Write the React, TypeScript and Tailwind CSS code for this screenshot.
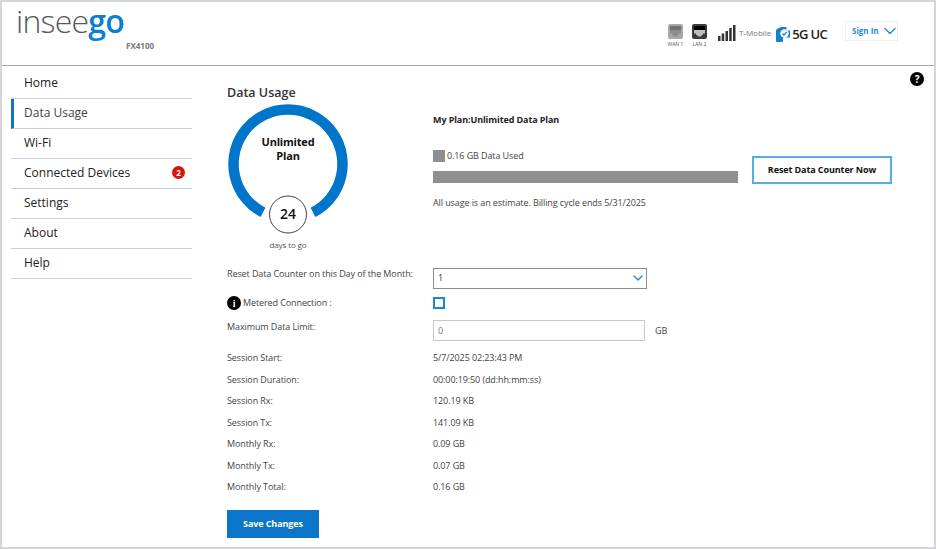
import { ChevronDown } from "lucide-react";

const navItems = ["Home", "Data Usage", "Wi-Fi", "Connected Devices", "Settings", "About", "Help"];

const sessionRows = [
  { label: "Session Start:", value: "5/7/2025 02:23:43 PM" },
  { label: "Session Duration:", value: "00:00:19:50 (dd:hh:mm:ss)" },
  { label: "Session Rx:", value: "120.19 KB" },
  { label: "Session Tx:", value: "141.09 KB" },
  { label: "Monthly Rx:", value: "0.09 GB" },
  { label: "Monthly Tx:", value: "0.07 GB" },
  { label: "Monthly Total:", value: "0.16 GB" },
];

function PortIcon({ frame, port, pins, label }: { frame: string; port: string; pins: string; label: string }) {
  return (
    <div className="flex w-[15px] flex-col items-center">
      <svg width="15" height="15" viewBox="0 0 15 15">
        <rect width="15" height="15" rx="2" fill={frame} />
        <rect x="2" y="2" width="11" height="4" fill={port} />
        <path d="M2 6h11v3.500h-2V11H9.500v1.500h-4V11H4V9.500H2z" fill={pins} />
      </svg>
      <span className="mt-[2px] whitespace-nowrap text-[5px] leading-[6px] text-[#555]">{label}</span>
    </div>
  );
}

function SignalBars() {
  return (
    <svg width="18" height="16" viewBox="0 0 18 16">
      <rect x="0" y="11" width="2.500" height="5" fill="#333" />
      <rect x="3.700" y="8.500" width="2.500" height="7.500" fill="#333" />
      <rect x="7.500" y="6" width="2.500" height="10" fill="#333" />
      <rect x="11.200" y="3" width="2.500" height="13" fill="#333" />
      <rect x="15" y="0" width="2.500" height="16" fill="#333" />
    </svg>
  );
}

function CarrierBadge() {
  return (
    <svg width="14" height="15" viewBox="0 0 14 15">
      <path d="M0 3.500Q0 2.500 1 2L4.500.3Q5 0 6 0h4.500v3.500H14v7H7v3.500Q7 15 6 15H1Q0 15 0 14z" fill="#1580d0" />
      <circle cx="8.500" cy="6.500" r="4.200" fill="#fff" />
      <path d="M6.500 6.500l1.500 1.500 2.800-3.200" fill="none" stroke="#1580d0" strokeWidth="1.200" />
    </svg>
  );
}

function Gauge() {
  return (
    <div className="relative h-[150px] w-[122px]">
      <svg width="122" height="132" viewBox="0 0 122 132">
        <path d="M 36 108.400 A 54.500 54.500 0 1 1 86 108.400" fill="none" stroke="#0075c9" strokeWidth="10.500" />
        <circle cx="61" cy="110.500" r="18.500" fill="#fff" stroke="#444" strokeWidth="1" />
      </svg>
      <div className="absolute left-0 right-0 top-[31px] text-center text-[11px] font-bold leading-[14px] tracking-[-0.2px] text-[#111]">
        Unlimited
        <br />
        Plan
      </div>
      <div className="absolute left-0 right-0 top-[100px] text-center text-[14px] font-semibold leading-[20px] text-[#111]">
        24
      </div>
      <div className="absolute left-0 right-0 top-[135px] text-center text-[8px] leading-[12px] text-[#555]">
        days to go
      </div>
    </div>
  );
}

export default function App() {
  return (
    <div className="flex h-[549px] w-[936px] flex-col overflow-hidden border-2 border-[#d6d6da] bg-white font-['Open_Sans',sans-serif] text-[#333]">
      <header className="flex h-[64px] shrink-0 border-b border-[#a9a9ad]">
        <div className="relative w-[200px] pl-[14px]">
          <div className="text-[32px] font-light leading-[38px] tracking-[-0.8px] text-[#58595b]">
            insee<span className="font-semibold text-[#0a7fd6]">go</span>
          </div>
          <div className="absolute left-[124px] top-[38px] text-[8px] font-bold text-[#777]">FX4100</div>
        </div>
        <div className="ml-auto flex items-start pr-[36px] pt-[19px]">
          <div className="mt-[3px] flex gap-[9px]">
            <PortIcon frame="#a8a8a8" port="#6f6f6f" pins="#8c8c8c" label="WAN 1" />
            <PortIcon frame="#3a3a3a" port="#000" pins="#bdbdbd" label="LAN 2" />
          </div>
          <div className="ml-[11px] mt-[4px] flex items-center gap-[3px]">
            <SignalBars />
            <span className="text-[8px] text-[#777]">T-Mobile</span>
          </div>
          <div className="ml-[5px] mt-[6px] flex items-center gap-[2px]">
            <CarrierBadge />
            <span className="text-[13px] font-semibold leading-[15px] tracking-[-0.7px] text-[#222]">5G UC</span>
          </div>
          <div className="ml-[18px] flex h-[20px] w-[53px] items-center justify-between border border-[#eef1f4] pl-[6px] text-[#1d8ad8]">
            <span className="text-[8px] font-bold">Sign In</span>
            <ChevronDown size={20} strokeWidth={1.600} className="-mr-[3px]" />
          </div>
        </div>
      </header>

      <div className="flex min-h-0 flex-1">
        <aside className="ml-[9px] mt-[3px] w-[181px] shrink-0">
          {navItems.map((item) => (
            <div
              key={item}
              className={`flex h-[30px] items-center justify-between border-b border-[#cfcfd3] pb-[2px] pr-[7px] text-[12px] ${
                item === "Data Usage"
                  ? "border-l-[3px] border-l-[#0a75c9] pl-[10px] text-[#444]"
                  : "pl-[13px] text-[#222]"
              }`}
            >
              <span>{item}</span>
              {item === "Connected Devices" && (
                <span className="flex h-[13px] w-[13px] items-center justify-center rounded-full bg-[#d8140c] text-[8px] font-bold text-white">
                  2
                </span>
              )}
            </div>
          ))}
        </aside>

        <main className="relative ml-[35px] flex-1 text-[9px] tracking-[-0.1px]">
          <h1 className="mt-[18px] text-[12.500px] font-semibold leading-[18px] tracking-normal text-[#333]">
            Data Usage
          </h1>
          <span className="absolute right-[10px] top-[6px] flex h-[14px] w-[14px] items-center justify-center rounded-full bg-black text-[10px] font-bold text-white">
            ?
          </span>

          <div className="mt-[2px] flex h-[164px]">
            <div className="w-[206px] shrink-0">
              <Gauge />
            </div>
            <div className="flex-1">
              <div className="mt-[9px] font-bold leading-[14px] text-[#222]">My Plan:Unlimited Data Plan</div>
              <div className="flex items-start">
                <div className="w-[305px]">
                  <div className="mt-[22px] flex items-center gap-[2px] leading-[14px] text-[#444]">
                    <span className="h-[12px] w-[12px] bg-[#8f8e90]" />
                    0.16 GB Data Used
                  </div>
                  <div className="mt-[8px] h-[12px] bg-[#8f8e90]" />
                  <div className="mt-[13px] leading-[14px] text-[#444]">
                    All usage is an estimate. Billing cycle ends 5/31/2025
                  </div>
                </div>
                <button className="ml-[14px] mt-[29px] h-[28px] w-[140px] border-2 border-[#55aee8] bg-white text-[9px] font-bold tracking-[-0.1px] text-[#111]">
                  Reset Data Counter Now
                </button>
              </div>
            </div>
          </div>

          <div className="flex h-[20px] items-center">
            <span className="w-[206px] -translate-y-[4px] text-[#444]">Reset Data Counter on this Day of the Month:</span>
            <div className="flex h-[21px] w-[214px] items-center justify-between border border-[#8d8d8d] pl-[4px] text-[#333]">
              1
              <ChevronDown size={16} strokeWidth={2} className="text-[#1d8ad8]" />
            </div>
          </div>

          <div className="mt-[6px] flex h-[18px] items-center">
            <span className="flex w-[206px] items-center gap-[2px] text-[#444]">
              <span className="flex h-[14px] w-[14px] items-center justify-center rounded-full bg-black font-['Liberation_Serif',serif] text-[10px] font-bold text-white">
                i
              </span>
              Metered Connection :
            </span>
            <span className="h-[12px] w-[12px] border-2 border-[#1d86d4]" />
          </div>

          <div className="mt-[8px] flex h-[21px] items-center">
            <span className="w-[206px] -translate-y-[4px] text-[#444]">Maximum Data Limit:</span>
            <div className="flex h-[21px] w-[212px] items-center border border-[#c9c9c9] pl-[4px] text-[#777]">0</div>
            <span className="ml-[10px] text-[#444]">GB</span>
          </div>

          <div className="mt-[6px] text-[#444]">
            {sessionRows.map((row) => (
              <div key={row.label} className="flex h-[21.500px] items-center">
                <span className="w-[206px]">{row.label}</span>
                <span>{row.value}</span>
              </div>
            ))}
          </div>

          <button className="mt-[12px] h-[28px] w-[92px] bg-[#0a75c9] text-[9px] font-bold text-white">
            Save Changes
          </button>
        </main>
      </div>
    </div>
  );
}
